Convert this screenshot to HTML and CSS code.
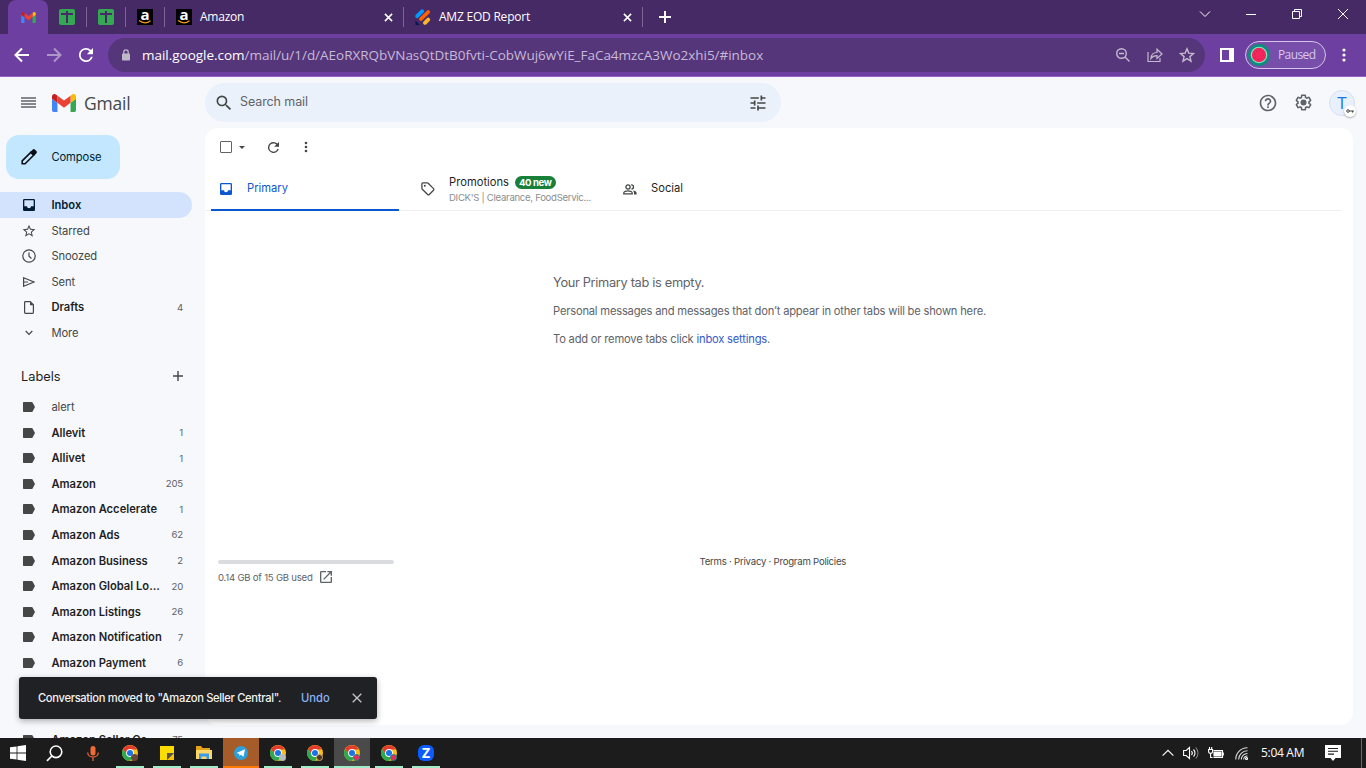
FILE: index.html
```html
<!DOCTYPE html>
<html lang="en">
<head>
  <meta charset="utf-8">
  <title>Gmail</title>
  <link rel="stylesheet" href="styles.css">
</head>
<body>
  <svg class="defs">
    <symbol id="gmail" viewBox="52 42 88 66">
      <path fill="#4285f4" d="M58 108h14V74L52 59v43c0 3.32 2.69 6 6 6"/>
      <path fill="#34a853" d="M120 108h14c3.32 0 6-2.69 6-6V59l-20 15"/>
      <path fill="#fbbc04" d="M120 48v26l20-15v-8c0-7.42-8.47-11.65-14.4-7.2"/>
      <path fill="#ea4335" d="M72 74V48l24 18 24-18v26L96 92"/>
      <path fill="#c5221f" d="M52 51v8l20 15V48l-5.6-4.2c-5.94-4.45-14.4-.22-14.4 7.2"/>
    </symbol>
    <symbol id="sheet" viewBox="0 0 16 16">
      <rect width="16" height="16" rx="2" fill="#34a853"/>
      <path d="M2 5h12M8 2v12" stroke="#462a65" stroke-width="2"/>
    </symbol>
    <symbol id="close" viewBox="0 0 10 10">
      <path d="M1 1l8 8M9 1L1 9" fill="none" stroke="currentColor" stroke-width="1.7"/>
    </symbol>
    <symbol id="inbox" viewBox="3 3 18 18">
      <path d="M19 3H5a2 2 0 0 0-2 2v14a2 2 0 0 0 2 2h14a2 2 0 0 0 2-2V5a2 2 0 0 0-2-2zm0 11h-4c0 1.66-1.35 3-3 3s-3-1.34-3-3H5V5h14v9z"/>
    </symbol>
    <symbol id="star" viewBox="1 1 22 22">
      <path d="M22 9.24l-7.19-.62L12 2 9.19 8.63 2 9.24l5.46 4.73L5.82 21 12 17.27 18.18 21l-1.63-7.03L22 9.24zM12 15.4l-3.76 2.27 1-4.28-3.32-2.88 4.38-.38L12 6.1l1.71 4.04 4.38.38-3.32 2.88 1 4.28L12 15.4z"/>
    </symbol>
    <symbol id="refresh" viewBox="4 4 16 16">
      <path d="M17.65 6.35A7.96 7.96 0 0 0 12 4a8 8 0 1 0 7.73 10h-2.08A6 6 0 1 1 12 6c1.66 0 3.14.69 4.22 1.78L13 11h7V4l-2.35 2.35z"/>
    </symbol>
    <symbol id="label" viewBox="0 0 12 10">
      <path d="M1 0h7.400c.5 0 .9.200 1.200.6L12 5 9.600 9.400c-.3.4-.7.6-1.200.6H1C.4 10 0 9.600 0 9V1C0 .4.4 0 1 0z"/>
    </symbol>
    <symbol id="chrome" viewBox="0 0 16 16">
      <circle cx="8" cy="8" r="8" fill="#fbc116"/>
      <path d="M8 4.400h6.930A8 8 0 0 0 1.070 4L4.900 10z" fill="#e33b2e"/>
      <path d="M1.070 4A8 8 0 0 0 8 16l3.300-6.200L4.900 9.800z" fill="#2da94f"/>
      <circle cx="8" cy="8" r="3.900" fill="#fff"/>
      <circle cx="8" cy="8" r="3" fill="#1a73e8"/>
    </symbol>
  </svg>

  <div class="tab-strip">
    <div class="tab tab-active"><svg width="15" height="11"><use href="#gmail"/></svg></div>
    <div class="tab tab-pinned"><svg width="16" height="16"><use href="#sheet"/></svg></div>
    <div class="tab tab-pinned"><svg width="16" height="16"><use href="#sheet"/></svg></div>
    <div class="tab tab-pinned">
      <span class="amazon-icon">a<svg viewBox="0 0 16 4"><path d="M2 .6Q8 5 13.500.8" fill="none" stroke="#f79a1e" stroke-width="1.200"/></svg></span>
    </div>
    <div class="tab tab-wide">
      <span class="amazon-icon">a<svg viewBox="0 0 16 4"><path d="M2 .6Q8 5 13.500.8" fill="none" stroke="#f79a1e" stroke-width="1.200"/></svg></span>
      <span class="tab-title">Amazon</span>
      <svg class="tab-close" width="9" height="9"><use href="#close"/></svg>
    </div>
    <div class="tab tab-wide">
      <svg width="16" height="16" viewBox="0 0 16 16">
        <g fill="none" stroke-width="3.800" stroke-linecap="round">
          <path d="M2.200 7.200l5-5" stroke="#0099ff"/>
          <path d="M6 10l7.200-7" stroke="#ff6100"/>
          <path d="M10 13.800l3.200-3.200" stroke="#ffb629"/>
        </g>
        <path d="M.5 11.500L5 16H1.500c-.6 0-1-.4-1-1z" fill="#0a1551"/>
      </svg>
      <span class="tab-title">AMZ EOD Report</span>
      <svg class="tab-close" width="9" height="9"><use href="#close"/></svg>
    </div>
    <svg class="new-tab" width="12" height="12"><path d="M6 0v12M0 6h12" stroke="#fff" stroke-width="2"/></svg>
    <div class="window-controls">
      <svg width="12" height="12" viewBox="0 0 12 12"><path d="M1 3.500l5 5 5-5"/></svg>
      <svg width="12" height="12" viewBox="0 0 12 12"><path d="M1 6.500h10"/></svg>
      <svg width="12" height="12" viewBox="0 0 12 12"><path d="M1.500 3.500h7v7h-7zM3.500 3.500v-2h7v7h-2"/></svg>
      <svg width="12" height="12" viewBox="0 0 12 12"><path d="M1 1l10 10M11 1L1 11"/></svg>
    </div>
  </div>

  <div class="toolbar">
    <svg class="nav-back" width="16" height="16" viewBox="0 0 16 16"><path d="M15 8H2M8 1.500L1.500 8 8 14.500"/></svg>
    <svg class="nav-forward" width="16" height="16" viewBox="0 0 16 16"><path d="M1 8h13M8 1.500L14.500 8 8 14.500"/></svg>
    <svg class="nav-reload" width="14" height="14"><use href="#refresh"/></svg>
    <div class="address-bar">
      <svg class="lock" width="8" height="12" viewBox="0 0 8 12"><rect y="4.500" width="8" height="7" rx=".8" fill="#bfb8c6"/><path d="M1.800 5V3a2.200 2.200 0 0 1 4.400 0v2" fill="none" stroke="#bfb8c6" stroke-width="1.300"/></svg>
      <span class="url"><b>mail.google.com</b>/mail/u/1/d/AEoRXRQbVNasQtDtB0fvti-CobWuj6wYiE_FaCa4mzcA3Wo2xhi5/#inbox</span>
      <div class="address-icons">
        <svg width="16" height="16" viewBox="0 0 16 16"><circle cx="6.500" cy="6.500" r="4.800"/><path d="M4 6.500h5M10 10l4.500 4.500"/></svg>
        <svg width="16" height="16" viewBox="0 0 16 16"><path d="M1 5v9.500h12V11M4 11.500c.2-4 2.500-6 6-6V2.200L15 7l-5 4.500V8.700c-3 0-4.800.9-6 2.800z" stroke-width="1.200"/></svg>
        <svg width="16" height="16" viewBox="0 0 16 16"><path d="M8 1.800l1.800 4.300 4.700.4-3.600 3.100 1.100 4.600-4-2.500-4 2.500 1.100-4.600-3.600-3.100 4.700-.4z"/></svg>
      </div>
    </div>
    <svg class="side-panel" width="14" height="14"><path d="M1 1h12v12H1z" fill="none" stroke="#fff" stroke-width="2"/><path d="M9 0h5v14H9z" fill="#fff"/></svg>
    <div class="profile">
      <svg width="22" height="22" viewBox="0 0 22 22"><circle cx="11" cy="11" r="11" fill="#0a8f7c"/><circle cx="11" cy="11" r="8.300" fill="#8ee3c4"/><circle cx="11" cy="11" r="7.200" fill="#f4265d"/><circle cx="11" cy="11" r="4.500" fill="none" stroke="#a3224f" stroke-width="1" stroke-dasharray="1 2.500"/></svg>
      <span>Paused</span>
    </div>
    <svg class="browser-menu" width="4" height="14"><circle cx="2" cy="2" r="1.600"/><circle cx="2" cy="7" r="1.600"/><circle cx="2" cy="12" r="1.600"/></svg>
  </div>

  <div class="gmail">
    <header class="header">
      <svg class="menu" width="15" height="11"><path d="M0 1h15M0 4h15M0 7h15M0 10h15" stroke="#5f6368" stroke-width="1.300"/></svg>
      <svg class="logo" width="24" height="18"><use href="#gmail"/></svg>
      <span class="logo-text">Gmail</span>
      <div class="search">
        <svg width="20" height="20" viewBox="0 0 24 24"><path d="M15.500 14h-.79l-.28-.27A6.470 6.470 0 0 0 16 9.500 6.500 6.500 0 1 0 9.500 16c1.610 0 3.090-.59 4.230-1.570l.27.28v.79l5 4.990L20.490 19l-4.990-5zm-6 0C7.010 14 5 11.990 5 9.500S7.010 5 9.500 5 14 7.010 14 9.500 11.990 14 9.500 14z"/></svg>
        <span class="search-hint">Search mail</span>
        <svg class="tune" width="20" height="20" viewBox="0 0 24 24"><path d="M3 17v2h6v-2H3zM3 5v2h10V5H3zm10 16v-2h8v-2h-8v-2h-2v6h2zM7 9v2H3v2h4v2h2V9H7zm14 4v-2H11v2h10zm-6-4h2V7h4V5h-4V3h-2v6z"/></svg>
      </div>
      <div class="header-icons">
        <svg width="20" height="20" viewBox="0 0 24 24"><path d="M11 18h2v-2h-2v2zm1-16C6.480 2 2 6.480 2 12s4.480 10 10 10 10-4.480 10-10S17.520 2 12 2zm0 18c-4.410 0-8-3.590-8-8s3.590-8 8-8 8 3.590 8 8-3.590 8-8 8zm0-14c-2.210 0-4 1.790-4 4h2c0-1.100.9-2 2-2s2 .9 2 2c0 2-3 1.750-3 5h2c0-2.250 3-2.500 3-5 0-2.210-1.790-4-4-4z"/></svg>
        <svg width="19" height="19" viewBox="0 0 24 24"><path d="M13.850 22.250h-3.700c-.74 0-1.360-.54-1.450-1.270l-.27-1.890c-.27-.14-.53-.29-.79-.46l-1.800.72c-.7.26-1.470-.03-1.810-.65L2.200 15.530c-.35-.66-.2-1.440.36-1.880l1.530-1.190c-.01-.15-.02-.3-.02-.46 0-.15.01-.31.02-.46l-1.520-1.190c-.59-.45-.74-1.260-.37-1.880l1.850-3.190c.34-.62 1.110-.9 1.790-.63l1.810.73c.26-.17.52-.32.78-.46l.27-1.910c.09-.7.71-1.250 1.440-1.250h3.700c.74 0 1.360.54 1.450 1.270l.27 1.890c.27.14.53.29.79.46l1.800-.72c.71-.26 1.480.03 1.820.65l1.840 3.180c.36.66.2 1.440-.36 1.880l-1.520 1.190c.01.15.02.3.02.46s-.01.31-.02.46l1.520 1.190c.56.45.72 1.230.37 1.860l-1.860 3.220c-.34.62-1.110.9-1.800.63l-1.800-.72c-.26.17-.52.32-.78.46l-.27 1.910c-.1.68-.72 1.220-1.460 1.220zm-3.230-2h2.760l.37-2.550.53-.22c.44-.18.88-.44 1.340-.78l.45-.34 2.380.96 1.380-2.400-2.030-1.580.07-.56c.03-.26.06-.51.06-.78s-.03-.53-.06-.78l-.07-.56 2.030-1.580-1.390-2.400-2.390.96-.45-.35c-.42-.32-.87-.58-1.330-.77l-.52-.22-.37-2.550h-2.760l-.37 2.550-.53.21c-.44.19-.88.44-1.340.79l-.45.33-2.380-.95-1.390 2.390 2.030 1.580-.07.56a7 7 0 0 0-.06.79c0 .26.02.53.06.78l.07.56-2.030 1.580 1.380 2.400 2.390-.96.45.35c.43.33.86.58 1.330.77l.53.22.38 2.550z"/><circle cx="12" cy="12" r="3.800"/></svg>
        <div class="avatar">T
          <span class="key-badge"><svg width="8" height="4" viewBox="0 0 8 4"><circle cx="2" cy="2" r="1.300" fill="none" stroke="#444" stroke-width="1"/><path d="M3.200 2H8M6.500 2v1.600" stroke="#444" stroke-width="1" fill="none"/></svg></span>
        </div>
      </div>
    </header>

    <div class="content">
      <aside class="sidebar">
        <div class="compose">
          <svg width="16" height="16" viewBox="0 0 16 16"><path d="M1.200 14.800v-2.900l8.500-8.500 2.900 2.900-8.500 8.500z" fill="none" stroke="#0b0f14" stroke-width="1.600"/><path d="M9.200 3L11.600.7a1.700 1.700 0 0 1 2.400 0l1.300 1.300a1.700 1.700 0 0 1 0 2.400L13 6.800z" fill="#0b0f14"/></svg>
          <span>Compose</span>
        </div>
        <div class="nav">
          <div class="nav-item nav-item-active"><svg width="12" height="12"><use href="#inbox"/></svg><span>Inbox</span></div>
          <div class="nav-item"><svg width="14" height="14"><use href="#star"/></svg><span>Starred</span></div>
          <div class="nav-item"><svg width="14" height="14" viewBox="0 0 14 14"><path d="M7 .8a6.200 6.200 0 1 0 0 12.400A6.200 6.200 0 1 0 7 .8M7 3.500v3.800l2.500 2.200" fill="none" stroke="#444746" stroke-width="1.200"/></svg><span>Snoozed</span></div>
          <div class="nav-item"><svg width="12" height="10" viewBox="0 0 12 10"><path d="M.6.8L11 5 .6 9.200zM.6 5h4.400" fill="none" stroke="#444746" stroke-width="1.200"/></svg><span>Sent</span></div>
          <div class="nav-item nav-item-bold"><svg width="10" height="13" viewBox="0 0 10 13"><path d="M1.400.6h4.800l3.200 3.200v7.800c0 .5-.3.8-.8.8H1.400c-.5 0-.8-.3-.8-.8V1.400c0-.5.3-.8.8-.8z" fill="none" stroke="#444746" stroke-width="1.200"/><path d="M6 .6v3.600h3.600z" fill="#444746"/></svg><span>Drafts</span><span class="count">4</span></div>
          <div class="nav-item"><svg width="8" height="6" viewBox="0 0 8 6"><path d="M.7 1L4 4.300 7.300 1" fill="none" stroke="#444746" stroke-width="1.200"/></svg><span>More</span></div>
        </div>
        <div class="labels-heading"><span>Labels</span><svg width="10" height="10"><path d="M5 0v10M0 5h10" stroke="#444746" stroke-width="1.400"/></svg></div>
        <div class="nav">
          <div class="nav-item"><svg width="12" height="10"><use href="#label"/></svg><span>alert</span></div>
          <div class="nav-item nav-item-bold"><svg width="12" height="10"><use href="#label"/></svg><span>Allevit</span><span class="count">1</span></div>
          <div class="nav-item nav-item-bold"><svg width="12" height="10"><use href="#label"/></svg><span>Allivet</span><span class="count">1</span></div>
          <div class="nav-item nav-item-bold"><svg width="12" height="10"><use href="#label"/></svg><span>Amazon</span><span class="count">205</span></div>
          <div class="nav-item nav-item-bold"><svg width="12" height="10"><use href="#label"/></svg><span>Amazon Accelerate</span><span class="count">1</span></div>
          <div class="nav-item nav-item-bold"><svg width="12" height="10"><use href="#label"/></svg><span>Amazon Ads</span><span class="count">62</span></div>
          <div class="nav-item nav-item-bold"><svg width="12" height="10"><use href="#label"/></svg><span>Amazon Business</span><span class="count">2</span></div>
          <div class="nav-item nav-item-bold"><svg width="12" height="10"><use href="#label"/></svg><span>Amazon Global Lo...</span><span class="count">20</span></div>
          <div class="nav-item nav-item-bold"><svg width="12" height="10"><use href="#label"/></svg><span>Amazon Listings</span><span class="count">26</span></div>
          <div class="nav-item nav-item-bold"><svg width="12" height="10"><use href="#label"/></svg><span>Amazon Notification</span><span class="count">7</span></div>
          <div class="nav-item nav-item-bold"><svg width="12" height="10"><use href="#label"/></svg><span>Amazon Payment</span><span class="count">6</span></div>
          <div class="nav-item nav-item-bold nav-item-last"><svg width="12" height="10"><use href="#label"/></svg><span>Amazon Seller Ce...</span><span class="count">75</span></div>
        </div>
      </aside>

      <main class="mail">
        <div class="mail-toolbar">
          <span class="checkbox"></span>
          <span class="caret"></span>
          <svg class="mail-refresh" width="11" height="11"><use href="#refresh"/></svg>
          <svg class="mail-more" width="4" height="12"><circle cx="2" cy="2" r="1.300"/><circle cx="2" cy="6" r="1.300"/><circle cx="2" cy="10" r="1.300"/></svg>
        </div>
        <div class="categories">
          <div class="category category-active">
            <svg width="12" height="12"><use href="#inbox"/></svg>
            <span class="category-name">Primary</span>
          </div>
          <div class="category">
            <svg width="14" height="14" viewBox="0 0 14 14"><path d="M.9 1.900v4.300c0 .4.100.7.4 1l5.300 5.300c.5.5 1.200.5 1.700 0l4.200-4.200c.5-.5.5-1.200 0-1.700L7.200 1.300c-.3-.3-.6-.4-1-.4H1.900c-.6 0-1 .4-1 1z" fill="none" stroke="#444746" stroke-width="1.300"/><circle cx="3.800" cy="3.800" r="1" fill="#444746"/></svg>
            <div class="category-text">
              <div class="category-row"><span class="category-name">Promotions</span><span class="badge">40 new</span></div>
              <div class="category-sub">DICK'S | Clearance, FoodServic...</div>
            </div>
          </div>
          <div class="category">
            <svg width="14" height="11" viewBox="0 0 14 11"><g fill="none" stroke="#444746" stroke-width="1.300"><circle cx="5" cy="3" r="2.100"/><path d="M.8 9.800V9c0-1.400 2.500-2.200 4.200-2.200S9.200 7.600 9.200 9v.8z"/><path d="M8.200 1c2.700-.6 3.300 3.800.2 4.100"/></g><path d="M10 6.500c2 .3 3.600 1.200 3.600 2.500v1.400H11V9c0-1-.3-1.800-1-2.500z" fill="#444746"/></svg>
            <span class="category-name">Social</span>
          </div>
        </div>
        <div class="empty">
          <p class="empty-title">Your Primary tab is empty.</p>
          <p class="empty-text">Personal messages and messages that don’t appear in other tabs will be shown here.</p>
          <p class="empty-text">To add or remove tabs click <a>inbox settings</a>.</p>
        </div>
        <footer class="footer">
          <div class="storage">
            <div class="storage-bar"></div>
            <div class="storage-text"><span>0.14 GB of 15 GB used</span>
              <svg width="12" height="12" viewBox="3 3 18 18"><path d="M19 19H5V5h7V3H5a2 2 0 0 0-2 2v14a2 2 0 0 0 2 2h14c1.100 0 2-.9 2-2v-7h-2v7zM14 3v2h3.590l-9.830 9.830 1.410 1.410L19 6.410V10h2V3h-7z"/></svg>
            </div>
          </div>
          <div class="terms">Terms · Privacy · Program Policies</div>
        </footer>
      </main>
    </div>
  </div>

  <div class="toast">
    <span class="toast-text">Conversation moved to "Amazon Seller Central".</span>
    <span class="toast-undo">Undo</span>
    <svg width="10" height="10" viewBox="0 0 10 10"><path d="M.7.7l8.600 8.600M9.300.7L.7 9.300" stroke="#c4c7c5" stroke-width="1.300"/></svg>
  </div>

  <div class="taskbar">
    <div class="task task-system"><svg width="16" height="16" viewBox="0 0 16 16"><path d="M0 2.300L6.600 1.400v6.100H0zM7.400 1.300L16 0v7.500H7.400zM0 8.400h6.600v6.200L0 13.700zM7.400 8.400H16V16l-8.600-1.200z" fill="#fff"/></svg></div>
    <div class="task task-system"><svg width="17" height="17" viewBox="0 0 17 17"><circle cx="10" cy="6.800" r="5.800" fill="none" stroke="#fff" stroke-width="1.600"/><path d="M5.800 11L1 15.800" stroke="#fff" stroke-width="1.700"/></svg></div>
    <div class="task task-mic"><svg width="12" height="15" viewBox="0 0 12 15"><rect x="3.500" width="5" height="9.500" rx="2.500" fill="#f26a36"/><path d="M.7 6.500c0 6 10.600 6 10.600 0M6 11v4" fill="none" stroke="#f26a36" stroke-width="1.200"/></svg></div>
    <div class="task task-open"><svg width="16" height="16"><use href="#chrome"/></svg><i class="dot dot-brown"></i></div>
    <div class="task task-open"><svg width="14" height="14" viewBox="0 0 14 14"><path d="M0 0h14v7H7v7H0z" fill="#ffdc00"/><path d="M7 7h7l-7 7z" fill="#53534f"/><path d="M14 7v7H7z" fill="#ffc400"/></svg></div>
    <div class="task task-open"><svg width="16" height="14" viewBox="0 0 16 14"><path d="M0 0h5l1.500 2H14v3H0z" fill="#e3a21a"/><path d="M0 4h16v9H0z" fill="#ffd766"/><path d="M3 7.500h10V13h-2.500v-2.500h-5V13H3z" fill="#3a9be8"/></svg></div>
    <div class="task task-alert"><svg width="14" height="14" viewBox="0 0 14 14"><circle cx="7" cy="7" r="7" fill="#2ba0da"/><path d="M2.500 6.900L11 3.300 9.500 10.700 6.800 8.800 5.500 10 5.200 7.900z" fill="#fff"/></svg></div>
    <div class="task task-open"><svg width="16" height="16"><use href="#chrome"/></svg><i class="dot dot-grey"></i></div>
    <div class="task task-open"><svg width="16" height="16"><use href="#chrome"/></svg><i class="dot dot-dark"></i></div>
    <div class="task task-current"><svg width="16" height="16"><use href="#chrome"/></svg><i class="dot dot-melon"></i></div>
    <div class="task task-open"><svg width="16" height="16"><use href="#chrome"/></svg><i class="dot dot-melon"></i></div>
    <div class="task task-open"><span class="zoom-icon">Z</span></div>
    <div class="tray">
      <svg width="12" height="8" viewBox="0 0 12 8"><path d="M.6 6.700L6 1.300l5.400 5.400"/></svg>
      <svg class="tray-sound" width="16" height="14" viewBox="0 0 16 14"><path d="M.6 4.500h2.600L6.500 1.500v11L3.200 9.500H.6zM8.500 5c1 1.200 1 2.800 0 4M10.500 3.500c2 2 2 5 0 7"/><path d="M12.700 1.500c3 3.300 3 7.700 0 11" opacity=".5"/></svg>
      <svg class="tray-battery" width="16" height="12" viewBox="0 0 16 12"><path d="M5.500 3.500h9v7h-9M15.300 5.500v3M.6 2.500h4v2c0 2.500-4 2.500-4 0zM1.500 0v2.500M3.700 0v2.500M2.600 6.500v4h2"/><path d="M6 5h7v4H6z" fill="#fff"/></svg>
      <svg class="tray-wifi" width="13" height="13" viewBox="0 0 13 13"><g opacity=".85"><path d="M.8 12.500A11.500 11.500 0 0 1 12.500.8M3.600 12.500A8.700 8.700 0 0 1 12.500 3.800M6.300 12.500a6 6 0 0 1 6.200-6M8.700 12.500a3.700 3.700 0 0 1 3.800-3.500"/></g><circle cx="11.500" cy="11.500" r="1"/></svg>
      <span class="clock">5:04 AM</span>
      <svg class="tray-notes" width="16" height="16" viewBox="0 0 16 16"><path d="M0 0h16v13h-5.500L8 16l-2.500-3H0z" fill="#fff" stroke="none"/><path d="M3 3.500h10M3 6.300h10M3 9.100h6" stroke="#1c1c1c"/></svg>
      <span class="show-desktop"></span>
    </div>
  </div>
</body>
</html>
```

FILE: styles.css
```css
* {
  box-sizing: border-box;
}
body {
  margin: 0;
  width: 1366px;
  height: 768px;
  overflow: hidden;
  display: flex;
  flex-direction: column;
  font-family: "Inter", "Liberation Sans", sans-serif;
  font-size: 11.2px;
  color: #444746;
  background: #f6f8fc;
  position: relative;
}
svg {
  display: block;
  flex-shrink: 0;
  fill: currentColor;
}
.defs {
  position: absolute;
  width: 0;
  height: 0;
}

/* Browser */
.tab-strip {
  flex: none;
  height: 34px;
  display: flex;
  align-items: center;
  padding-left: 8px;
  background: #462a65;
  color: #fff;
  font-family: "Open Sans", "Noto Sans", sans-serif;
}
.tab {
  display: flex;
  align-items: center;
  justify-content: center;
  height: 20px;
  border-right: 1px solid #7b6592;
}
.tab-active {
  width: 40px;
  height: 34px;
  border: none;
  border-radius: 8px 8px 0 0;
  background: #6c3fa0;
}
.tab-pinned {
  width: 39px;
}
.tab-wide {
  width: 239px;
  justify-content: flex-start;
  padding: 0 10px 0 11px;
}
.tab-title {
  margin-left: 8px;
  padding-bottom: 1px;
  font-size: 12px;
  letter-spacing: -0.22px;
}
.tab-close {
  margin-left: auto;
}
.amazon-icon {
  width: 16px;
  height: 16px;
  background: #000;
  display: flex;
  flex-direction: column;
  align-items: center;
  font: bold 15px/11px "Open Sans", sans-serif;
}
.amazon-icon svg {
  width: 16px;
  height: 4px;
}
.new-tab {
  margin-left: 16px;
}
.window-controls {
  margin-left: auto;
  padding: 0 17px 6px 0;
  display: flex;
  gap: 34px;
}
.window-controls path {
  fill: none;
  stroke: #fff;
}
.toolbar {
  flex: none;
  height: 43px;
  display: flex;
  align-items: center;
  padding: 0 20px 1px 14px;
  background: #6c3fa0;
  border-bottom: 1px solid #9362c4;
  color: #fff;
  font-family: "Open Sans", "Noto Sans", sans-serif;
}
.nav-back,
.nav-forward {
  fill: none;
  stroke: #fff;
  stroke-width: 2;
}
.nav-forward {
  margin-left: 16px;
  opacity: 0.45;
}
.nav-reload {
  margin-left: 17px;
}
.address-bar {
  width: 1097px;
  height: 34px;
  margin-left: 15px;
  padding: 0 10px 0 14px;
  border-radius: 17px;
  background: #56367a;
  display: flex;
  align-items: center;
}
.url {
  margin-left: 12px;
  font-size: 13.5px;
  letter-spacing: -0.025px;
  color: #c7b9d8;
}
.url b {
  font-weight: 400;
  color: #fff;
}
.address-icons {
  margin-left: auto;
  display: flex;
  gap: 16px;
}
.address-icons svg {
  fill: none;
  stroke: #c4b9ce;
  stroke-width: 1.4;
}
.side-panel {
  margin-left: 15px;
}
.profile {
  width: 81px;
  height: 28px;
  margin-left: 11px;
  padding-left: 2px;
  border: 1px solid #d5c5ea;
  border-radius: 14px;
  background: #774eaa;
  display: flex;
  align-items: center;
  gap: 8px;
  font-size: 12px;
  letter-spacing: -0.6px;
  color: #d8c9ee;
}
.browser-menu {
  margin-left: auto;
}

/* Header */
.gmail {
  flex: 1;
  min-height: 0;
  display: flex;
  flex-direction: column;
}
.header {
  flex: none;
  height: 51px;
  display: flex;
  align-items: center;
  padding-left: 21px;
}
.logo {
  margin-left: 16px;
}
.logo-text {
  width: 122px;
  margin-left: 8px;
  font: 17.5px "Open Sans", sans-serif;
  letter-spacing: -0.2px;
}
.search {
  width: 576px;
  height: 39px;
  border-radius: 20px;
  padding: 0 13px 0 9px;
  margin-left: -1px;
  background: #eaf1fb;
  display: flex;
  align-items: center;
  gap: 6px;
  font-size: 12.5px;
  color: #5f6368;
}
.search svg {
  color: #444746;
}
.search-hint {
  padding-bottom: 2px;
  letter-spacing: -0.1px;
}
.tune {
  margin-left: auto;
}
.header-icons {
  margin-left: auto;
  padding-right: 11px;
  display: flex;
  align-items: center;
  gap: 16px;
  color: #5f6368;
}
.avatar {
  position: relative;
  width: 26px;
  height: 26px;
  border: 1px solid #d8dfee;
  border-radius: 50%;
  background: #e8f0fe;
  color: #1a73e8;
  font: 17px/24px "Open Sans", sans-serif;
  text-align: center;
}
.key-badge {
  position: absolute;
  right: -2px;
  bottom: -2px;
  width: 12px;
  height: 12px;
  border-radius: 50%;
  background: #fff;
  box-shadow: 0 1px 2px rgba(0,0,0,0.3);
  display: flex;
  align-items: center;
  justify-content: center;
}

/* Sidebar */
.content {
  flex: 1;
  min-height: 0;
  display: flex;
}
.sidebar {
  width: 205px;
  padding-top: 7px;
  overflow: hidden;
}
.compose {
  width: 114px;
  height: 44px;
  margin: 0 0 13.2px 6px;
  padding-left: 15px;
  border-radius: 13px;
  background: #c2e7ff;
  color: #001d35;
  display: flex;
  align-items: center;
  gap: 14px;
  letter-spacing: -0.1px;
}
.compose span {
  padding: 0 0 1px 0.4px;
}
.nav-item {
  width: 192px;
  height: 25.6px;
  padding: 0 9px 0 21px;
  border-radius: 0 13px 13px 0;
  display: grid;
  grid-template-columns: 16px minmax(0, 1fr) auto;
  column-gap: 14.4px;
  align-items: center;
  white-space: nowrap;
  letter-spacing: -0.1px;
}
.nav-item svg {
  justify-self: center;
}
.nav-item-active {
  background: #d3e3fd;
  color: #001d35;
  font-weight: 600;
  letter-spacing: 0;
}
.nav-item-bold {
  font-weight: 600;
  color: #1f1f1f;
  letter-spacing: 0;
}
.nav-item-bold svg {
  color: #444746;
}
.nav-item-last {
  margin-top: 51.2px;
}
.count {
  font-size: 9.6px;
  font-weight: 400;
  letter-spacing: -0.2px;
  color: #5f6368;
}
.labels-heading {
  height: 48.4px;
  width: 205px;
  padding: 12px 22px 0 21px;
  display: flex;
  align-items: flex-start;
  justify-content: space-between;
  line-height: 37px;
  font-size: 12.8px;
  color: #1f1f1f;
}
.labels-heading svg {
  margin-top: 13.4px;
}

/* Mail */
.mail {
  width: 1148px;
  height: 597px;
  border-radius: 13px;
  background: #fff;
  display: flex;
  flex-direction: column;
}
.mail-toolbar {
  height: 38px;
  padding-left: 15px;
  display: flex;
  align-items: center;
}
.checkbox {
  width: 12px;
  height: 12px;
  border: 1.5px solid #5f6368;
  border-radius: 1px;
}
.caret {
  margin-left: 7px;
  border: 3px solid transparent;
  border-top-color: #444746;
  border-bottom: none;
}
.mail-refresh {
  margin-left: 23px;
}
.mail-more {
  margin-left: 25px;
}
.categories {
  height: 45px;
  margin-right: 12px;
  padding-left: 6px;
  display: flex;
  border-bottom: 1px solid #eceff1;
}
.category {
  width: 202px;
  padding-left: 10px;
  display: flex;
  align-items: center;
}
.category > svg {
  width: 14px;
  margin-top: 2px;
}
.category-active {
  width: 188px;
  height: 45px;
  margin-right: 12px;
  padding: 1px 0 0 8px;
  border-bottom: 2px solid #0b57d0;
  color: #0b57d0;
}
.category-name {
  color: #1f1f1f;
}
.category > .category-name {
  margin-left: 14px;
}
.category-active .category-name {
  color: #0b57d0;
}
.category-text {
  margin: 3px 0 0 14px;
}
.category-row {
  display: flex;
  align-items: center;
  gap: 6px;
  height: 16px;
}
.badge {
  height: 13px;
  padding: 0 4px;
  border-radius: 7px;
  background: #188038;
  color: #fff;
  font-size: 9.6px;
  font-weight: 700;
  line-height: 13px;
  letter-spacing: -0.4px;
}
.category-sub {
  font-size: 9.6px;
  line-height: 15px;
  letter-spacing: -0.3px;
  color: #8b8e90;
  white-space: nowrap;
}
.empty {
  height: 348px;
  padding: 62px 0 0 348px;
  color: #5f6368;
}
.empty p {
  margin: 0 0 8px;
  line-height: 20px;
}
.empty-title {
  font-size: 12.8px;
  letter-spacing: -0.32px;
}
.empty-text {
  letter-spacing: -0.21px;
}
.empty a {
  color: #3559c9;
}
.footer {
  display: flex;
  padding-left: 13px;
  font-size: 9.6px;
  letter-spacing: -0.23px;
  color: #5f6368;
}
.storage {
  width: 176px;
}
.storage-bar {
  height: 4px;
  margin-top: 1px;
  border-radius: 2px;
  background: #dadce0;
}
.storage-text {
  margin-top: 7px;
  display: flex;
  align-items: center;
  gap: 7px;
}
.terms {
  margin-left: 305.5px;
  line-height: 6px;
  color: #444746;
}

/* Toast */
.toast {
  position: absolute;
  left: 19px;
  top: 677px;
  width: 358px;
  height: 42px;
  padding: 0 15px 0 19px;
  border-radius: 3px;
  background: #202124;
  box-shadow: 0 2px 6px rgba(0,0,0,0.3);
  display: flex;
  align-items: center;
  color: #f2f2f2;
  font-weight: 500;
  white-space: nowrap;
}
.toast-text {
  width: 263px;
  letter-spacing: -0.33px;
}
.toast-undo {
  width: 51px;
  color: #8ab4f8;
}

/* Taskbar */
.taskbar {
  flex: none;
  height: 30px;
  background: #1c1c1c;
  display: flex;
  gap: 1px;
  color: #fff;
}
.task {
  position: relative;
  width: 36px;
  height: 30px;
  display: flex;
  align-items: center;
  justify-content: center;
}
.task-system {
  margin-right: -1px;
}
.task-mic {
  margin: 0 0 0 3px;
}
.task-open::after {
  content: "";
  position: absolute;
  left: 4px;
  right: 4px;
  bottom: 0;
  height: 2px;
  background: #a0ecc9;
}
.task-current {
  background: #4a4a4a;
  border-bottom: 2px solid #a0ecc9;
  padding-top: 2px;
}
.task-alert {
  background: #a55c28;
  border-bottom: 2px solid #ff7a00;
  padding-top: 2px;
}
.dot {
  position: absolute;
  left: 19px;
  top: 16px;
  width: 7px;
  height: 7px;
  border-radius: 50%;
}
.dot-brown {
  background: #67473c;
}
.dot-grey {
  background: #b9b9b9;
}
.dot-dark {
  background: #4b3722;
  border: 1px solid #c9a46e;
}
.dot-melon {
  background: #f4265d;
  border: 1px solid #0a8f7c;
}
.zoom-icon {
  width: 16px;
  height: 16px;
  border-radius: 6px;
  background: #0b5cff;
  font: bold 14px/16px "Open Sans", sans-serif;
  text-align: center;
}
.tray {
  margin-left: auto;
  display: flex;
  align-items: center;
}
.tray svg {
  fill: none;
  stroke: #fff;
  stroke-width: 1.1;
}
.tray-sound {
  margin-left: 9px;
}
.tray-battery {
  margin-left: 9px;
}
.tray-wifi {
  margin-left: 11px;
}
.clock {
  width: 72px;
  padding: 0 0 1px 13px;
  font: 12px "Open Sans", sans-serif;
  letter-spacing: -0.3px;
  white-space: nowrap;
}
.tray-notes {
  margin-left: 5px;
}
.show-desktop {
  width: 1px;
  height: 30px;
  margin: 0 4px 0 20px;
  background: #6a6a6a;
}
```
